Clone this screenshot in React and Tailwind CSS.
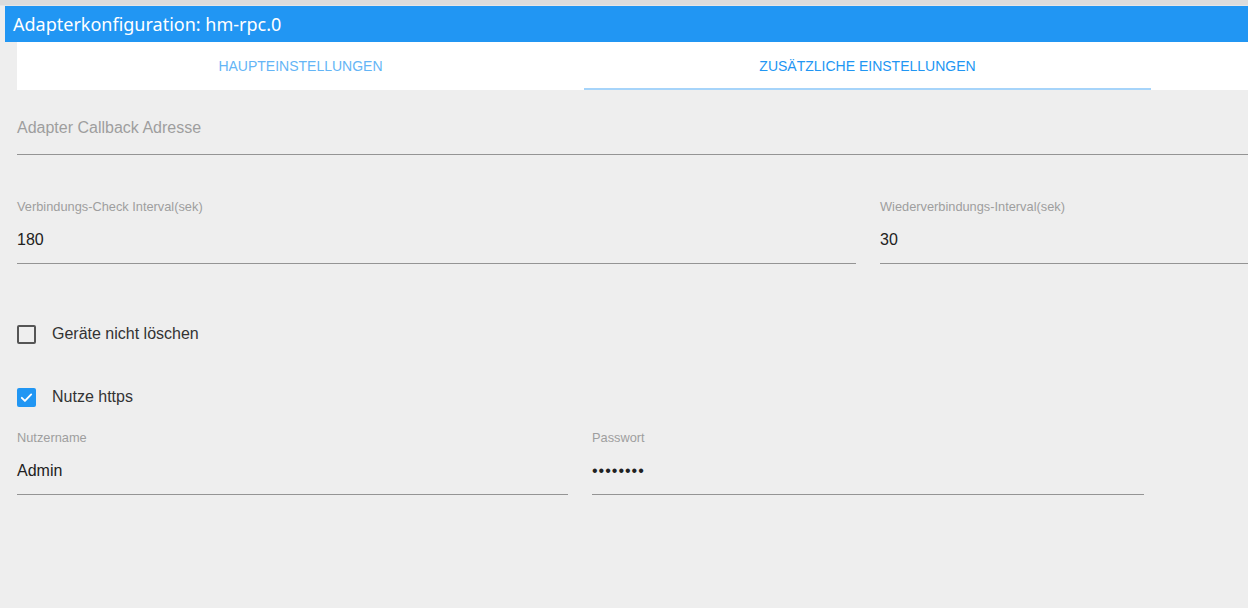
const Field = ({ label, value, className = "", valueClass = "" }) => (
  <div className={`flex flex-col ${className}`}>
    <label className="text-[12.8px] leading-[14px] text-[#9e9e9e] h-[14px]">{label}</label>
    <div className={`h-[50px] pt-[16px] leading-[20px] text-[16px] text-[#212121] border-b border-[#949494] ${valueClass}`}>
      {value}
    </div>
  </div>
);

const Checkbox = ({ checked, label }) => (
  <div className="flex items-center h-[20px]">
    {checked ? (
      <span className="w-[19px] h-[19px] rounded-[2px] bg-[#2196f3] flex items-center justify-center">
        <svg width="15" height="15" viewBox="0 0 24 24" fill="none" stroke="white" strokeWidth="3" strokeLinecap="round" strokeLinejoin="round">
          <path d="M4.5 12.5l5 5L19.5 7" />
        </svg>
      </span>
    ) : (
      <span className="w-[19px] h-[19px] rounded-[2px] border-2 border-[#555]" />
    )}
    <span className="ml-[16px] text-[16px] text-[#333]">{label}</span>
  </div>
);

export default function App() {
  return (
    <div className="w-[1248px] h-[608px] bg-[#eeeeee] overflow-hidden" style={{ fontFamily: '"Liberation Sans", Arial, sans-serif' }}>
      <div className="h-[6px] bg-[#dcdcdc] border-b border-[#e6e6e6]" />
      <div className="ml-[5px] h-[36px] bg-[#2196f3] flex items-center pl-[8px] text-white text-[18px]" style={{ fontFamily: '"Noto Sans", sans-serif' }}>
        Adapterkonfiguration: hm-rpc.0
      </div>
      <div className="ml-[17px] h-[48px] bg-white flex">
        <div className="w-[567px] flex items-center justify-center text-[14px] text-[#64b5f6]">HAUPTEINSTELLUNGEN</div>
        <div className="w-[567px] flex items-center justify-center text-[14px] text-[#2196f3] relative">
          ZUSÄTZLICHE EINSTELLUNGEN
          <span className="absolute left-0 right-0 bottom-0 h-[2px] bg-[#a6d4fa]" />
        </div>
      </div>
      <div className="pl-[17px]">
        <div className="mt-[21px] h-[44px] border-b border-[#949494] text-[16px] text-[#9e9e9e] pt-[5px]">Adapter Callback Adresse</div>
        <div className="mt-[45px] flex">
          <Field label="Verbindungs-Check Interval(sek)" value="180" className="w-[839px]" />
          <Field label="Wiederverbindungs-Interval(sek)" value="30" className="ml-[24px] flex-1" />
        </div>
        <div className="mt-[60px]">
          <Checkbox label="Geräte nicht löschen" />
        </div>
        <div className="mt-[43px]">
          <Checkbox checked label="Nutze https" />
        </div>
        <div className="mt-[24px] flex">
          <Field label="Nutzername" value="Admin" className="w-[551px]" />
          <Field label="Passwort" value="••••••••" valueClass="tracking-[1px]" className="ml-[24px] w-[552px]" />
        </div>
      </div>
    </div>
  );
}
